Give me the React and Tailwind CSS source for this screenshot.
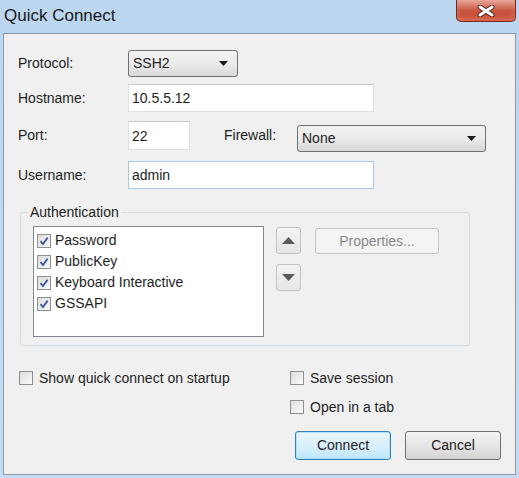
import { useState } from "react";

const font = { fontFamily: '"Liberation Sans", Arial, sans-serif' };

const Check = ({ checked, onChange }) => (
  <button
    type="button"
    onClick={onChange}
    className="w-[14px] h-[14px] shrink-0 border border-[#8e8f8f] bg-gradient-to-br from-[#dcdcdc] to-[#fbfbfb] flex items-center justify-center p-0"
  >
    {checked && (
      <svg width="10" height="10" viewBox="0 0 10 10">
        <path d="M1.5 5.2 L4 8 L8.6 1.6" fill="none" stroke="#3d5aa0" strokeWidth="1.8" />
      </svg>
    )}
  </button>
);

const Caret = () => (
  <svg width="9" height="5" viewBox="0 0 9 5">
    <path d="M0 0 L9 0 L4.5 5 Z" fill="#1a1a1a" />
  </svg>
);

const Select = ({ value, className }) => (
  <div
    className={
      "flex items-center justify-between rounded-[3px] border border-[#707070] bg-gradient-to-b from-[#f2f2f2] via-[#ebebeb] to-[#d8d8d8] pl-[4px] pr-[9px] text-[14px] text-[#1e1e1e] " +
      className
    }
  >
    <span>{value}</span>
    <Caret />
  </div>
);

const Field = ({ value, className, focus }) => (
  <input
    defaultValue={value}
    className={
      "bg-white px-[3px] text-[14px] text-[#1e1e1e] outline-none border " +
      (focus ? "border-[#a9c8e6] " : "border-[#dbdfe6] border-t-[#c5c9d0] ") +
      className
    }
    style={font}
  />
);

const ArrowBtn = ({ up }) => (
  <button
    type="button"
    className="w-[25px] h-[27px] rounded-[3px] border border-[#c2c2c2] bg-gradient-to-b from-[#f4f4f4] to-[#e6e6e6] flex items-center justify-center"
  >
    <svg width="13" height="7" viewBox="0 0 13 7">
      <path d={up ? "M0 7 L6.5 0 L13 7 Z" : "M0 0 L13 0 L6.5 7 Z"} fill="#5b5b5b" />
    </svg>
  </button>
);

export default function App() {
  const [auth, setAuth] = useState({
    Password: true,
    PublicKey: true,
    "Keyboard Interactive": true,
    GSSAPI: true
  });
  const [opts, setOpts] = useState({ startup: false, save: false, tab: false });
  const toggle = (k) => setOpts((p) => ({ ...p, [k]: !p[k] }));

  return (
    <div className="w-[519px] h-[478px] bg-gradient-to-b from-[#bcd6f0] to-[#c6dcf1] flex flex-col text-[#1e1e1e]" style={font}>
      {/* title bar */}
      <div className="h-[33px] flex items-start justify-between shrink-0">
        <div className="pl-[4px] pt-[3px] text-[17px] text-[#1a1a1a]">Quick Connect</div>
        <button
          type="button"
          className="mr-[3px] w-[60px] h-[22px] rounded-b-[5px] border border-t-0 border-[#6e2a22] bg-gradient-to-b from-[#e8a89c] via-[#c85641] to-[#c4442f] flex items-center justify-center shadow-[inset_0_-3px_5px_rgba(240,140,110,0.6)]"
        >
          <svg width="20" height="12" viewBox="0 0 20 12">
            <path d="M4 2 L16 10 M16 2 L4 10" stroke="#5a2a26" strokeWidth="5" strokeLinecap="round" />
            <path d="M4 2 L16 10 M16 2 L4 10" stroke="#ffffff" strokeWidth="3" strokeLinecap="round" />
          </svg>
        </button>
      </div>

      {/* panel */}
      <div className="mx-[3px] h-[442px] border border-[#8b99aa] bg-[#f0f0f0] flex flex-col text-[14px]">
        <div className="mt-[16px] h-[27px] flex items-center">
          <span className="w-[124px] pl-[14px]">Protocol:</span>
          <Select value="SSH2" className="w-[110px] h-[27px]" />
        </div>

        <div className="mt-[7px] h-[28px] flex items-center">
          <span className="w-[124px] pl-[14px]">Hostname:</span>
          <Field value="10.5.5.12" className="w-[246px] h-[28px]" />
        </div>

        <div className="mt-[9px] h-[29px] flex items-center">
          <span className="w-[124px] pl-[14px]">Port:</span>
          <Field value="22" className="w-[62px] h-[29px]" />
          <span className="ml-[34px] w-[73px]">Firewall:</span>
          <Select value="None" className="w-[189px] h-[27px] mt-[6px]" />
        </div>

        <div className="mt-[11px] h-[28px] flex items-center">
          <span className="w-[124px] pl-[14px]">Username:</span>
          <Field value="admin" focus className="w-[246px] h-[28px]" />
        </div>

        <fieldset className="mt-[15px] ml-[16px] w-[450px] h-[142px] border border-[#d5dde3] rounded-[3px] pl-[12px] pr-0">
          <legend className="-ml-[5px] px-[2px] leading-[16px]">Authentication</legend>
          <div className="mt-[6px] flex items-start">
            <div className="w-[231px] h-[111px] bg-white border border-[#828790] pt-[3px] pl-[3px] flex flex-col">
              {Object.keys(auth).map((k) => (
                <label key={k} className="h-[21px] flex items-center gap-[4px]">
                  <Check checked={auth[k]} onChange={() => setAuth((p) => ({ ...p, [k]: !p[k] }))} />
                  <span>{k}</span>
                </label>
              ))}
            </div>
            <div className="ml-[12px] flex flex-col gap-[10px] pt-[1px]">
              <ArrowBtn up />
              <ArrowBtn />
            </div>
            <button
              type="button"
              disabled
              className="ml-[14px] mt-[2px] w-[124px] h-[26px] rounded-[3px] border border-[#c2c4c6] bg-[#f4f4f4] text-[#8a8a8a] text-[14px]"
            >
              Properties...
            </button>
          </div>
        </fieldset>

        <div className="mt-[24px] flex items-start">
          <label className="ml-[15px] w-[271px] h-[16px] flex items-center gap-[6px]">
            <Check checked={opts.startup} onChange={() => toggle("startup")} />
            <span>Show quick connect on startup</span>
          </label>
          <div className="flex flex-col gap-[13px]">
            <label className="h-[16px] flex items-center gap-[6px]">
              <Check checked={opts.save} onChange={() => toggle("save")} />
              <span>Save session</span>
            </label>
            <label className="h-[16px] flex items-center gap-[6px]">
              <Check checked={opts.tab} onChange={() => toggle("tab")} />
              <span>Open in a tab</span>
            </label>
          </div>
        </div>

        <div className="mt-[16px] flex justify-end gap-[14px] pr-[14px]">
          <button
            type="button"
            className="w-[96px] h-[29px] rounded-[3px] border border-[#3c7fb1] bg-gradient-to-b from-[#eaf6fd] via-[#d9f0fc] to-[#bee6fd] shadow-[inset_0_0_0_1px_#a8e2fb] text-[14px]"
          >
            Connect
          </button>
          <button
            type="button"
            className="w-[96px] h-[29px] rounded-[3px] border border-[#707070] bg-gradient-to-b from-[#f2f2f2] via-[#e6e6e6] to-[#d3d3d3] text-[14px]"
          >
            Cancel
          </button>
        </div>
      </div>
    </div>
  );
}
